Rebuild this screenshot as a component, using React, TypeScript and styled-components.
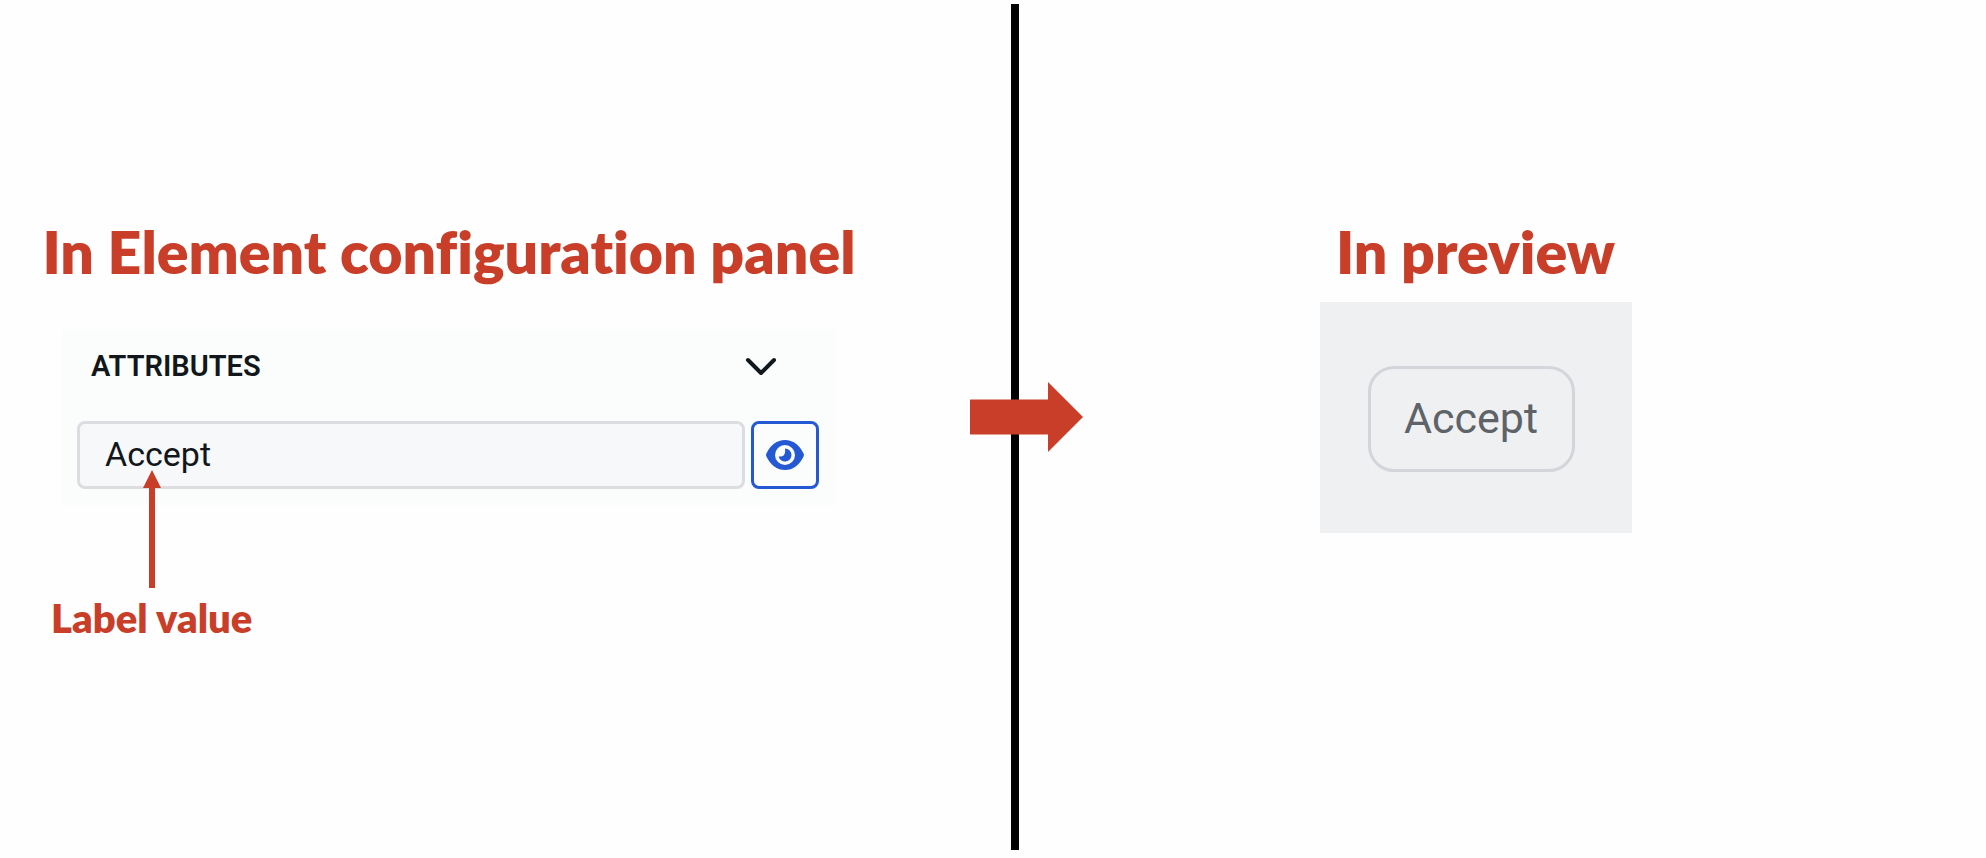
import React, { useState } from "react";
import styled, { createGlobalStyle } from "styled-components";

const red = "#c93e29";
const blue = "#2459d3";

const GlobalStyle = createGlobalStyle`
  *, *::before, *::after { box-sizing: border-box; }
  body { margin: 0; background: #fefefe; font-family: Roboto, sans-serif; }
  button, input { font: inherit; margin: 0; }
`;

const Page = styled.main`
  display: grid;
  grid-template-columns: 1011fr 8px 967fr;
  min-height: 100vh;
`;

const Side = styled.section<{ $inset: string }>`
  display: flex;
  flex-direction: column;
  align-items: center;
  min-width: 0;
  padding: ${(p) => p.$inset};
`;

const Heading = styled.h2<{ $gap: number }>`
  margin: 0 0 ${(p) => p.$gap}px;
  color: ${red};
  font: 800 59px/72px Lato, sans-serif;
  font-variant-ligatures: none;
  white-space: nowrap;
`;

const Divider = styled.div`
  position: relative;
  margin: 4px 0 8px;
  background: #000;
`;

const FlowArrow = styled.svg`
  position: absolute;
  top: 378px;
  left: -41px;
  width: 114px;
  height: 70px;
  fill: ${red};
`;

const Panel = styled.div`
  align-self: stretch;
  padding: 0 17px 16px 15px;
  background: #fbfdfc;
`;

const PanelHeader = styled.button`
  display: flex;
  align-items: center;
  justify-content: space-between;
  width: 100%;
  height: 74px;
  padding: 0 42px 0 14px;
  border: 0;
  background: none;
  color: #11171a;
  font-size: 29px;
  font-weight: 600;
  line-height: 36px;
`;

const Chevron = styled.svg`
  width: 32px;
  height: 20px;
  fill: none;
  stroke: currentColor;
  stroke-width: 4;
  stroke-linecap: round;
  stroke-linejoin: round;
`;

const Field = styled.div`
  display: flex;
  gap: 6px;
  margin-top: 18px;
`;

const TextInput = styled.input`
  flex: 1;
  min-width: 0;
  height: 68px;
  padding: 0 25px 2px;
  border: 3px solid #dcdde1;
  border-radius: 8px;
  background: #f7f8fa;
  color: #11171a;
  font-size: 34px;
`;

const EyeButton = styled.button`
  display: grid;
  place-items: center;
  width: 68px;
  height: 68px;
  padding: 0;
  border: 3px solid ${blue};
  border-radius: 8px;
  background: #fbfdfc;
  color: ${blue};
`;

const Note = styled.div`
  position: relative;
  display: flex;
  flex-direction: column;
  align-items: center;
  align-self: flex-start;
  margin: -35px 0 0 -11px;
  color: ${red};
`;

const NoteLabel = styled.label`
  margin-top: 6px;
  font: 800 40px/48px Lato, sans-serif;
  white-space: nowrap;
`;

const Preview = styled.div`
  width: 312px;
  padding: 64px 57px 61px 48px;
  background: #eff0f2;
`;

const PreviewButton = styled.button`
  width: 100%;
  height: 106px;
  padding: 0 0 2px;
  border: 3px solid #d4d5da;
  border-radius: 26px;
  background: transparent;
  color: #5d6368;
  font-size: 43px;
`;

export default function App() {
  const [open, setOpen] = useState(true);
  const [value, setValue] = useState("Accept");
  const [visible, setVisible] = useState(true);

  return (
    <>
      <GlobalStyle />
      <Page>
        <Side $inset="216px 175px 0 62px">
          <Heading $gap={41}>In Element configuration panel</Heading>
          <Panel>
            <PanelHeader aria-expanded={open} onClick={() => setOpen(!open)}>
              ATTRIBUTES
              <Chevron viewBox="0 0 32 20" aria-hidden="true">
                <path d="M3 4 16 17 29 4" />
              </Chevron>
            </PanelHeader>
            {open && (
              <Field>
                <TextInput id="label-value" value={value} onChange={(e) => setValue(e.target.value)} />
                <EyeButton aria-label="Show label" aria-pressed={visible} onClick={() => setVisible(!visible)}>
                  <svg width="40" height="32" viewBox="0 0 40 32" aria-hidden="true">
                    <path
                      fill="currentColor"
                      d="M1.400 14.600C5.500 6 12 1 20 1s14.500 5 18.600 13.600q.8 1.400 0 2.800C34.500 26 28 31 20 31S5.500 26 1.400 17.400q-.8-1.400 0-2.800Z"
                    />
                    <circle cx="20" cy="16" r="10" fill="#fbfdfc" />
                    <path fill="currentColor" d="M20 9.500a6.500 6.500 0 1 1-6.400 7.700q3.200.8 5-.8 2-2 1.400-6.900Z" />
                  </svg>
                </EyeButton>
              </Field>
            )}
          </Panel>
          <Note>
            <svg width="18" height="118" viewBox="0 0 18 118" fill="currentColor" aria-hidden="true">
              <path d="M9 0 18 18H12V118H6V18H0Z" />
            </svg>
            <NoteLabel htmlFor="label-value">Label value</NoteLabel>
          </Note>
        </Side>
        <Divider>
          <FlowArrow viewBox="0 0 114 70" aria-hidden="true">
            <path d="M0 17.500H78V0L113 35 78 70V52.500H0Z" />
          </FlowArrow>
        </Divider>
        <Side $inset="216px 54px 0 0">
          <Heading $gap={14}>In preview</Heading>
          <Preview>
            <PreviewButton>{value}</PreviewButton>
          </Preview>
        </Side>
      </Page>
    </>
  );
}
